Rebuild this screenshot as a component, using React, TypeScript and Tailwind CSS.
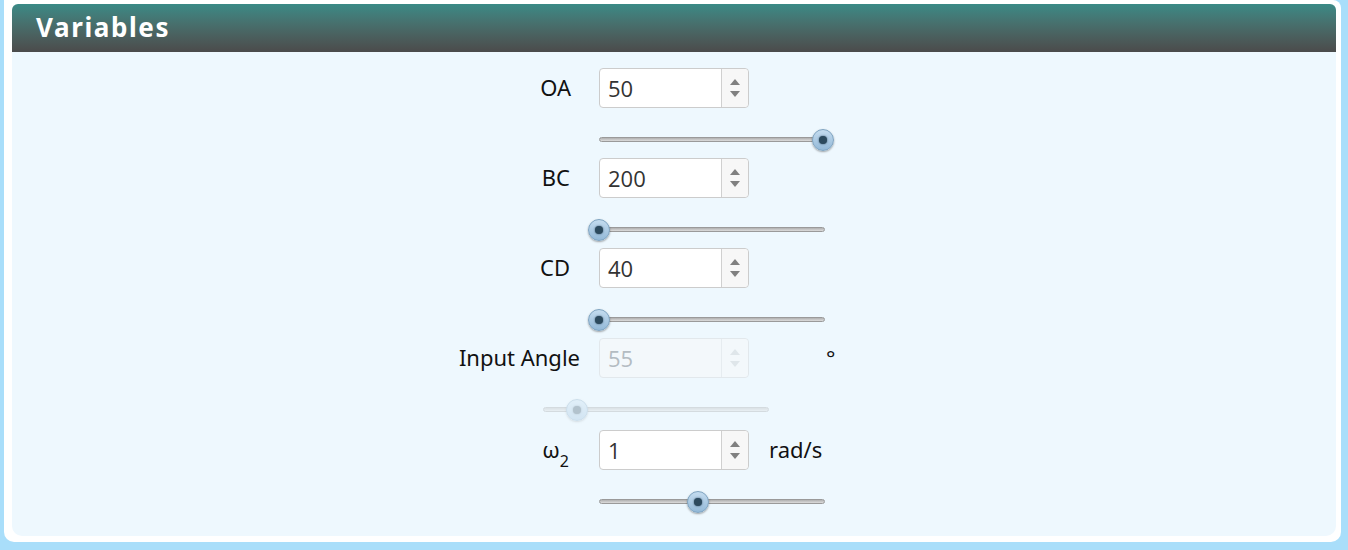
import React from 'react';

interface VarRow {
  label: React.ReactNode;
  value: string;
  unit?: string;
  labelPad: string;
  unitPad?: string;
  pct: number;
  sliderShift?: string;
  disabled?: boolean;
  height: string;
}

const rows: VarRow[] = [
  { label: 'OA', value: '50', labelPad: 'pr-[28px]', pct: 99, height: 'h-[90px]' },
  { label: 'BC', value: '200', labelPad: 'pr-[29px]', pct: 0, height: 'h-[90px]' },
  { label: 'CD', value: '40', labelPad: 'pr-[29px]', pct: 0, height: 'h-[90px]' },
  {
    label: 'Input Angle',
    value: '55',
    unit: '°',
    labelPad: 'pr-[19px]',
    unitPad: 'pl-[77px]',
    pct: 15,
    sliderShift: '-ml-[56px]',
    disabled: true,
    height: 'h-[92px]',
  },
  {
    label: (
      <span>
        ω<sub className="text-[16px] align-[-5px]">2</sub>
      </span>
    ),
    value: '1',
    unit: 'rad/s',
    labelPad: 'pr-[30px]',
    unitPad: 'pl-[20px]',
    pct: 44,
    height: 'h-[90px]',
  },
];

const Spinner: React.FC<{ disabled?: boolean }> = ({ disabled }) => (
  <div
    className={`flex w-[27px] flex-col items-center justify-center gap-[6px] rounded-r-[4px] border-l ${
      disabled ? 'border-[#e6ecf0] bg-[#f3f8fb]' : 'border-[#d0d0d0] bg-[#f7f7f7]'
    }`}
  >
    <svg width="10" height="6" viewBox="0 0 10 6">
      <path d="M5 0 L10 6 L0 6 Z" fill={disabled ? '#dfe6ea' : '#808080'} />
    </svg>
    <svg width="10" height="6" viewBox="0 0 10 6">
      <path d="M0 0 L10 0 L5 6 Z" fill={disabled ? '#dfe6ea' : '#808080'} />
    </svg>
  </div>
);

const Slider: React.FC<{ pct: number; disabled?: boolean }> = ({ pct, disabled }) => (
  <div className={`relative h-[22px] w-[226px] ${disabled ? 'opacity-30' : ''}`}>
    <div className="absolute left-0 right-0 top-[8px] h-[5px] rounded-full border border-[#9a9a9a] bg-gradient-to-b from-[#b0b0b0] to-[#dcdcdc]" />
    <div
      className="absolute top-0 flex h-[22px] w-[22px] -translate-x-[11px] items-center justify-center rounded-full border border-[#7ea3c0] bg-gradient-to-b from-[#c4dcef] to-[#93b9d8] shadow-[0_1px_2px_rgba(0,0,0,0.35)]"
      style={{ left: `${pct}%` }}
    >
      <div className="h-[8px] w-[8px] rounded-full bg-[#2c4a5e] shadow-[0_0_2px_#2c4a5e]" />
    </div>
  </div>
);

export default function App() {
  return (
    <div className="h-[550px] w-full bg-[#a9defa] pb-[8px] pl-[4px] pr-[7px] font-['Noto_Sans',sans-serif]">
      <div className="h-full rounded-b-[10px] rounded-tr-[8px] bg-white pb-[6px] pl-[8px] pr-[5px] pt-[4px]">
        <div className="flex h-full flex-col overflow-hidden rounded-[6px] rounded-b-[10px]">
          <div className="flex h-[48px] items-center bg-gradient-to-b from-[#3a8a86] to-[#4b4b4b] pl-[24px]">
            <span className="pb-[1px] text-[26px] font-bold tracking-[1.6px] text-white">Variables</span>
          </div>
          <div className="flex flex-1 flex-col bg-[#eef8fe] pt-[16px]">
            {rows.map((r, i) => (
              <div key={i} className={`flex flex-col ${r.height}`}>
                <div className="grid h-[40px] grid-cols-[1fr_150px_1fr] items-center">
                  <div className={`pb-[2px] text-right text-[22px] text-[#111] ${r.labelPad}`}>{r.label}</div>
                  <div
                    className={`flex h-[40px] rounded-[4px] border ${
                      r.disabled ? 'border-[#e2e8ec] bg-[#f3f8fb]' : 'border-[#cccccc] bg-white'
                    }`}
                  >
                    <div
                      className={`flex flex-1 items-center pl-[8px] font-['Open_Sans',sans-serif] text-[22px] ${
                        r.disabled ? 'text-[#b4bcc2]' : 'text-[#333]'
                      }`}
                    >
                      {r.value}
                    </div>
                    <Spinner disabled={r.disabled} />
                  </div>
                  <div className={`pb-[2px] text-[22px] text-[#111] ${r.unitPad ?? ''}`}>{r.unit}</div>
                </div>
                <div className="grid grid-cols-[1fr_150px_1fr] pt-[21px]">
                  <div />
                  <div className={r.sliderShift ?? ''}>
                    <Slider pct={r.pct} disabled={r.disabled} />
                  </div>
                  <div />
                </div>
              </div>
            ))}
          </div>
        </div>
      </div>
    </div>
  );
}
